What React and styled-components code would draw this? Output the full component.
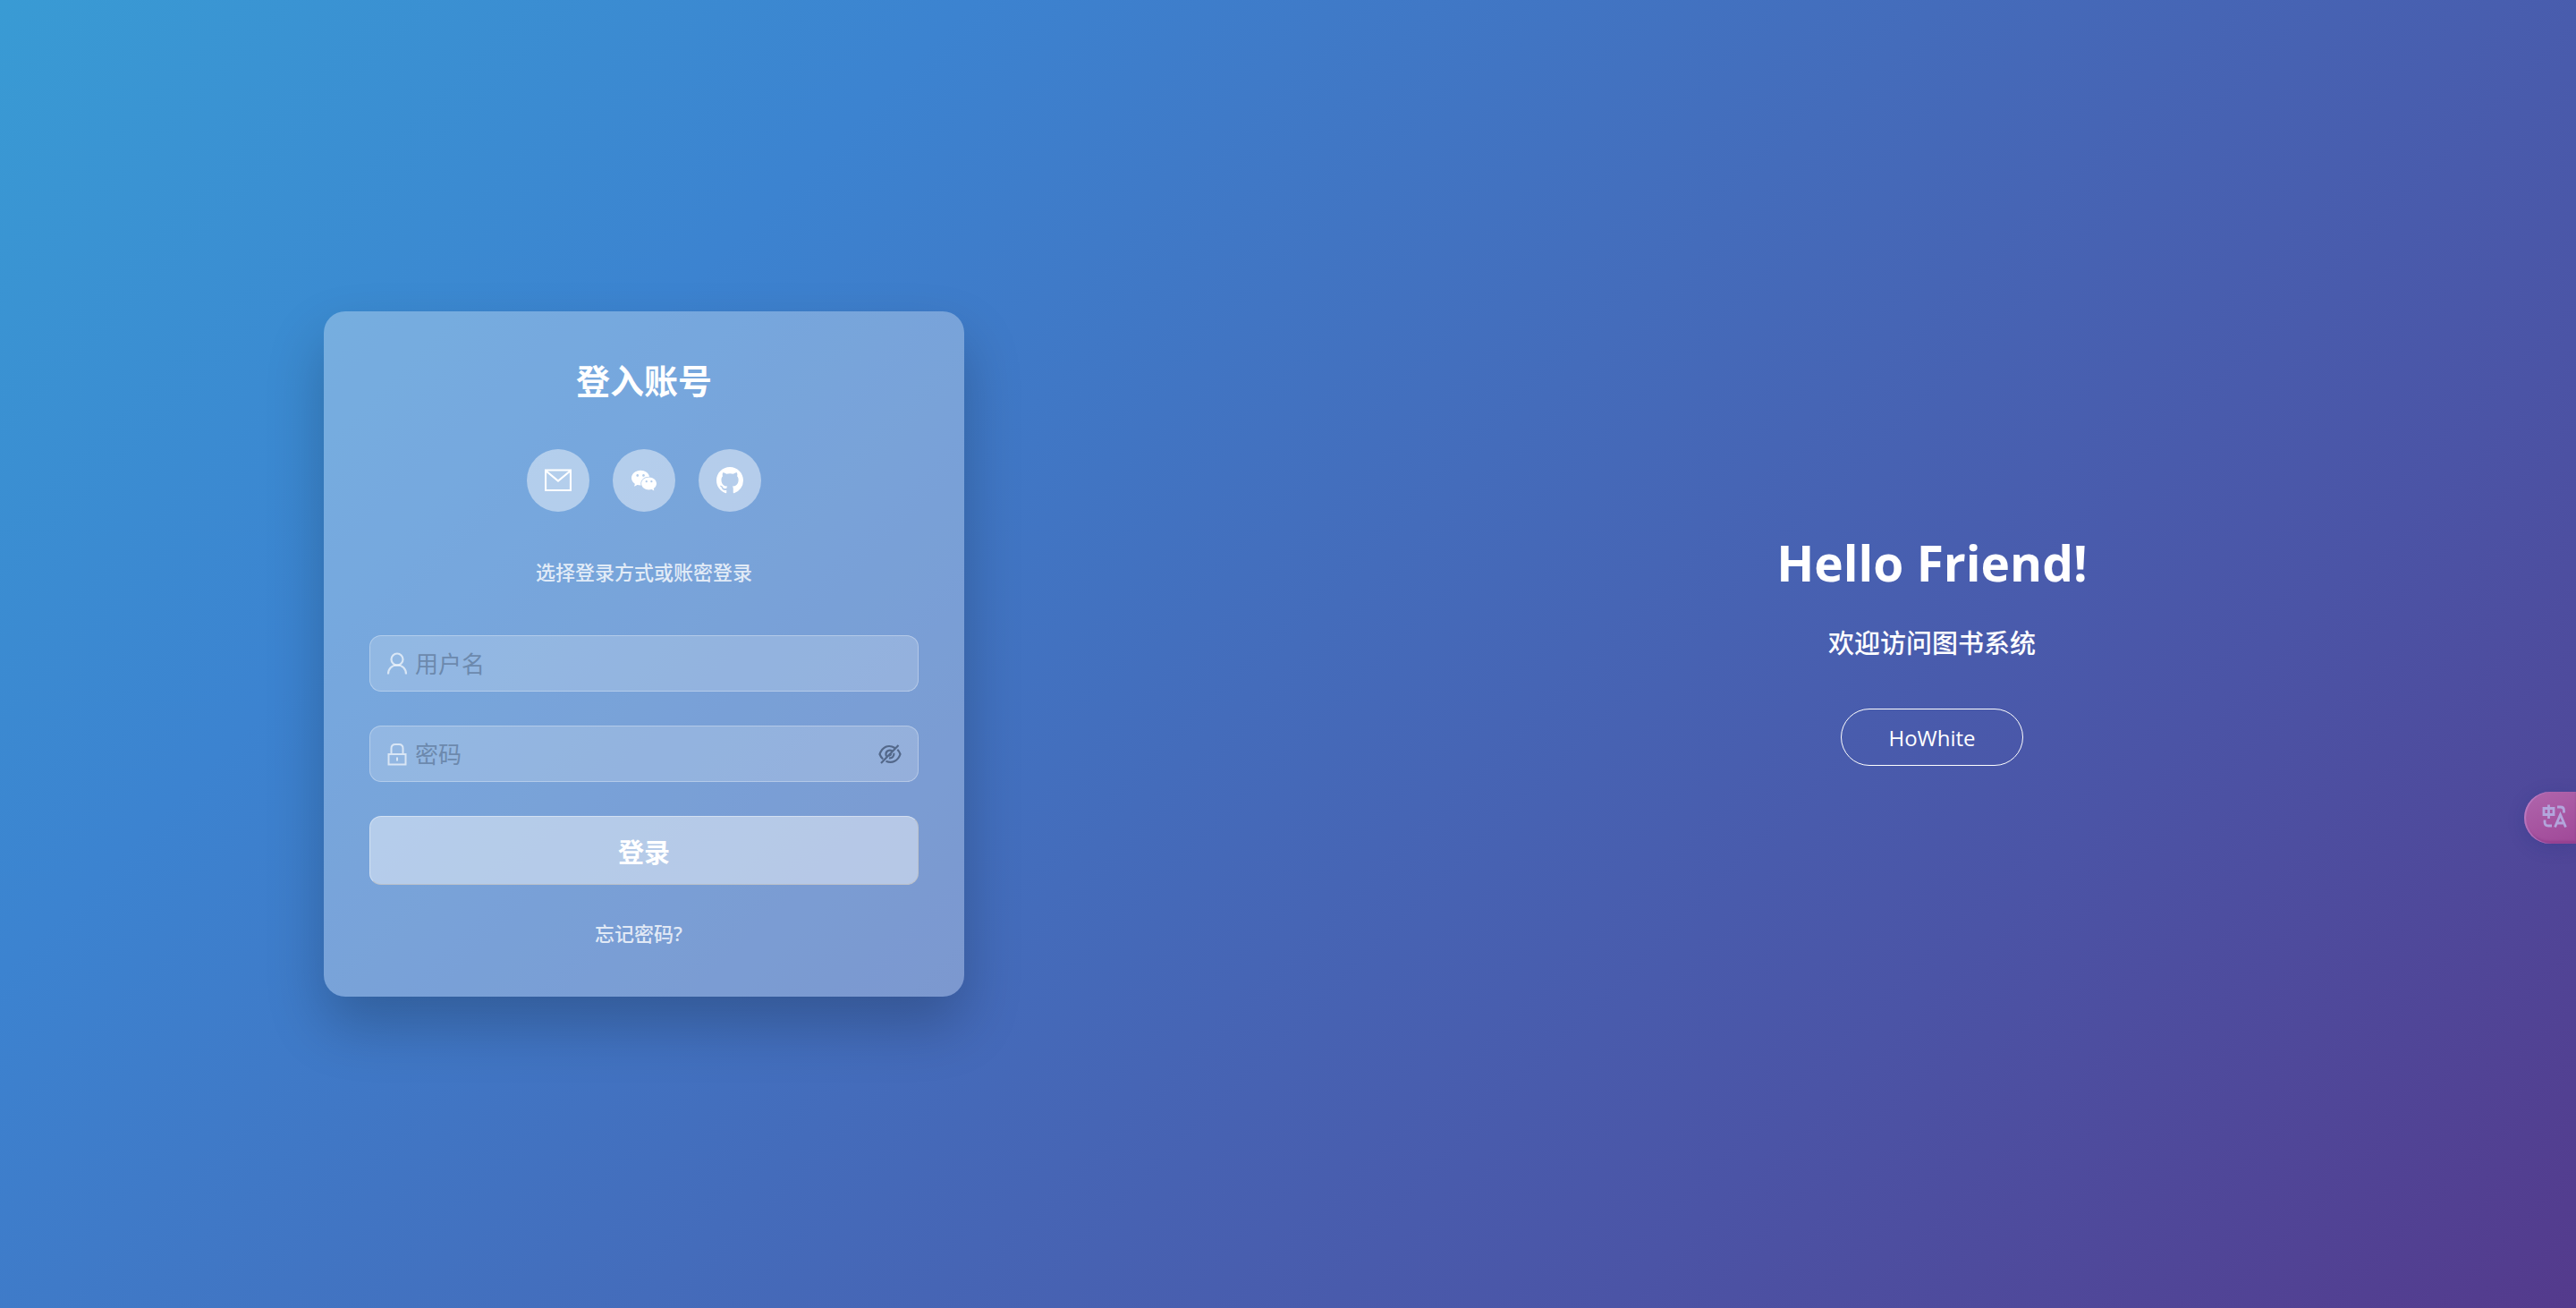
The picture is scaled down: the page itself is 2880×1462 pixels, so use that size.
import React, { useState } from "react";
import styled, { createGlobalStyle } from "styled-components";
import { AiFillWechat } from "react-icons/ai";

const GlobalStyle = createGlobalStyle`
  *, *::before, *::after { box-sizing: border-box; }
  body {
    margin: 0;
    font-family: "Noto Sans", "Noto Sans CJK SC", sans-serif;
    color: #fff;
  }
`;

const Page = styled.main`
  display: grid;
  grid-template-columns: 1fr 1fr;
  align-items: center;
  min-height: 100vh;
  overflow: hidden;
  background: linear-gradient(135deg, #399bd4 0%, #3c83d0 25%, #446cbb 50%, #4b54a6 75%, #543a8c 100%);
`;

const Side = styled.section`
  display: flex;
  flex-direction: column;
  align-items: center;
`;

const Card = styled.form`
  display: flex;
  flex-direction: column;
  align-items: center;
  width: 50%;
  max-width: 716px;
  padding: 51px;
  border-radius: 24px;
  background: rgba(255, 255, 255, 0.3);
  box-shadow: 0 32px 64px rgba(0, 0, 0, 0.22);
`;

const CardTitle = styled.h1`
  margin: 0 0 51px;
  font-size: 38px;
  line-height: 52px;
  font-weight: 700;
`;

const Socials = styled.div`
  display: flex;
  gap: 26px;
  margin-bottom: 51px;
`;

const SocialButton = styled.button`
  display: grid;
  place-items: center;
  width: 70px;
  height: 70px;
  padding: 0;
  border: 0;
  border-radius: 50%;
  background: rgba(255, 255, 255, 0.45);
  color: #fff;
  font-size: 32px;
`;

const Hint = styled.p`
  margin: 0 0 51px;
  padding-bottom: 4px;
  color: rgba(255, 255, 255, 0.8);
  font-size: 22px;
  font-weight: 500;
  line-height: 32px;
`;

const Field = styled.label`
  display: flex;
  align-items: center;
  gap: 8px;
  width: 100%;
  height: 63px;
  margin-bottom: 38px;
  padding: 0 18px;
  border: 1px solid rgba(255, 255, 255, 0.3);
  border-radius: 13px;
  background: rgba(255, 255, 255, 0.2);
  color: rgba(255, 255, 255, 0.65);
`;

const TextInput = styled.input`
  flex: 1;
  min-width: 0;
  padding: 0;
  border: 0;
  outline: 0;
  background: none;
  color: #fff;
  font-family: inherit;
  font-size: 26px;
  line-height: 38px;
  &::placeholder { color: #6c89ad; opacity: 1; }
`;

const IconButton = styled.button`
  display: grid;
  place-items: center;
  padding: 0;
  border: 0;
  background: none;
  color: #53688a;
`;

const Submit = styled.button`
  width: 100%;
  height: 77px;
  margin-bottom: 38px;
  border: 1px solid;
  border-color: rgba(255, 255, 255, 0.4) rgba(190, 190, 190, 0.7) rgba(190, 190, 190, 0.7) rgba(255, 255, 255, 0.4);
  border-radius: 13px;
  background: rgba(255, 255, 255, 0.45);
  color: #fff;
  font-family: inherit;
  font-size: 29px;
  font-weight: 700;
`;

const Forgot = styled.a`
  padding: 0 12px 4px 0;
  color: rgba(255, 255, 255, 0.8);
  font-size: 22px;
  font-weight: 500;
  line-height: 32px;
  text-decoration: none;
`;

const Greeting = styled.h2`
  margin: 0 0 46px;
  font-family: "Open Sans", sans-serif;
  font-size: 55px;
  line-height: 46px;
  font-weight: 700;
`;

const Welcome = styled.p`
  margin: 0 0 52px;
  font-size: 29px;
  font-weight: 500;
  line-height: 42px;
`;

const AuthorButton = styled.button`
  height: 64px;
  padding: 0 52px;
  border: 1px solid #fff;
  border-radius: 32px;
  background: none;
  color: #fff;
  font-family: "Open Sans", sans-serif;
  font-size: 24px;
`;

const Translate = styled.button`
  position: fixed;
  top: 885px;
  right: 0;
  display: flex;
  align-items: center;
  width: 58px;
  height: 58px;
  padding: 0 0 4px 20px;
  border: 0;
  border-radius: 29px 0 0 29px;
  background: linear-gradient(160deg, #b066ac, #a04898);
  box-shadow: 0 4px 20px rgba(20, 40, 120, 0.2), inset 2px 0 1px rgba(200, 140, 210, 0.6), inset 0 -3px 2px rgba(130, 50, 130, 0.4);
  color: #b3a5dc;
`;

const MailIcon = () => (
  <svg width="30" height="26" viewBox="0 0 30 26" fill="none" stroke="currentColor" strokeWidth="2.200" aria-hidden="true">
    <path d="M1 1.500h28v22.500H1zM1 2l14 11.500L29 2" />
  </svg>
);

const GithubIcon = () => (
  <svg width="30" height="30" viewBox="0 0 16 16" fill="currentColor" aria-hidden="true">
    <path d="M8 0C3.58 0 0 3.58 0 8c0 3.54 2.29 6.53 5.47 7.59.4.07.55-.17.55-.38 0-.19-.01-.82-.01-1.49-2.01.37-2.53-.49-2.69-.94-.09-.23-.48-.94-.82-1.13-.28-.15-.68-.52-.01-.53.63-.01 1.08.58 1.23.82.72 1.21 1.87.87 2.33.66.07-.52.28-.87.51-1.07-1.78-.2-3.64-.89-3.64-3.95 0-.87.31-1.59.82-2.15-.08-.2-.36-1.02.08-2.12 0 0 .67-.21 2.2.82.64-.18 1.32-.27 2-.27s1.36.09 2 .27c1.53-1.04 2.2-.82 2.2-.82.44 1.1.16 1.92.08 2.12.51.56.82 1.27.82 2.15 0 3.07-1.87 3.75-3.65 3.95.29.25.54.73.54 1.48 0 1.07-.01 1.93-.01 2.2 0 .21.15.46.55.38A8.01 8.01 0 0 0 16 8c0-4.42-3.58-8-8-8" />
  </svg>
);

const UserIcon = () => (
  <svg width="24" height="26" viewBox="0 0 24 26" fill="none" stroke="currentColor" strokeWidth="2.200" aria-hidden="true">
    <circle cx="12" cy="8" r="6.500" />
    <path d="M2 24.500c0-6 4-10 10-10s10 4 10 10" />
  </svg>
);

const LockIcon = () => (
  <svg width="24" height="26" viewBox="0 0 24 26" fill="none" stroke="currentColor" strokeWidth="2" aria-hidden="true">
    <path d="M2.500 13h19v11.500h-19zM5.500 13V6.500Q5.500 2 10 2h4q4.500 0 4.500 4.500V13M12 16.500v4" />
  </svg>
);

const EyeOffIcon = () => (
  <svg width="26" height="24" viewBox="0 0 26 24" fill="none" stroke="currentColor" strokeWidth="2.200" aria-hidden="true">
    <path d="M18.500 5C11 .5 4.500 4 1.500 12c1 2.500 2.200 4.200 3.700 5.500M8.500 19.800c7 3 13.500-.3 16-7.800-.8-2.200-1.800-3.900-3.200-5.200M3 22 22.500 2" />
    <path d="M15.500 8.300c-3.500-2-7.500.5-7 4.400.1.700.3 1.200.6 1.700M17.300 10.800c.8 3.400-2 6.200-5.300 5.500M14 11.500c.2 1.200-.8 2.200-2 2" />
  </svg>
);

const TranslateIcon = () => (
  <svg width="28" height="26" viewBox="0 0 28 26" fill="none" stroke="currentColor" strokeWidth="2.800" aria-hidden="true">
    <path d="M2 4.500h11v7H2zM7.500.5v15.500M17 3h3.500q4 0 4 4v2.500M3 17.500V20q0 4 4 4h4" />
    <path d="m14.500 25.500 6-14 6 14M17 21h7" />
  </svg>
);

export default function App() {
  const [visible, setVisible] = useState(false);
  return (
    <>
      <GlobalStyle />
      <Page>
        <Side>
          <Card onSubmit={(e) => e.preventDefault()}>
            <CardTitle>登入账号</CardTitle>
            <Socials>
              <SocialButton type="button" aria-label="邮箱"><MailIcon /></SocialButton>
              <SocialButton type="button" aria-label="微信"><AiFillWechat /></SocialButton>
              <SocialButton type="button" aria-label="GitHub"><GithubIcon /></SocialButton>
            </Socials>
            <Hint>选择登录方式或账密登录</Hint>
            <Field>
              <UserIcon />
              <TextInput type="text" placeholder="用户名" aria-label="用户名" />
            </Field>
            <Field>
              <LockIcon />
              <TextInput type={visible ? "text" : "password"} placeholder="密码" aria-label="密码" />
              <IconButton type="button" aria-label="显示密码" onClick={() => setVisible(!visible)}>
                <EyeOffIcon />
              </IconButton>
            </Field>
            <Submit type="submit">登录</Submit>
            <Forgot href="#forgot">忘记密码?</Forgot>
          </Card>
        </Side>
        <Side>
          <Greeting>Hello Friend!</Greeting>
          <Welcome>欢迎访问图书系统</Welcome>
          <AuthorButton type="button">HoWhite</AuthorButton>
        </Side>
      </Page>
      <Translate type="button" aria-label="翻译"><TranslateIcon /></Translate>
    </>
  );
}
